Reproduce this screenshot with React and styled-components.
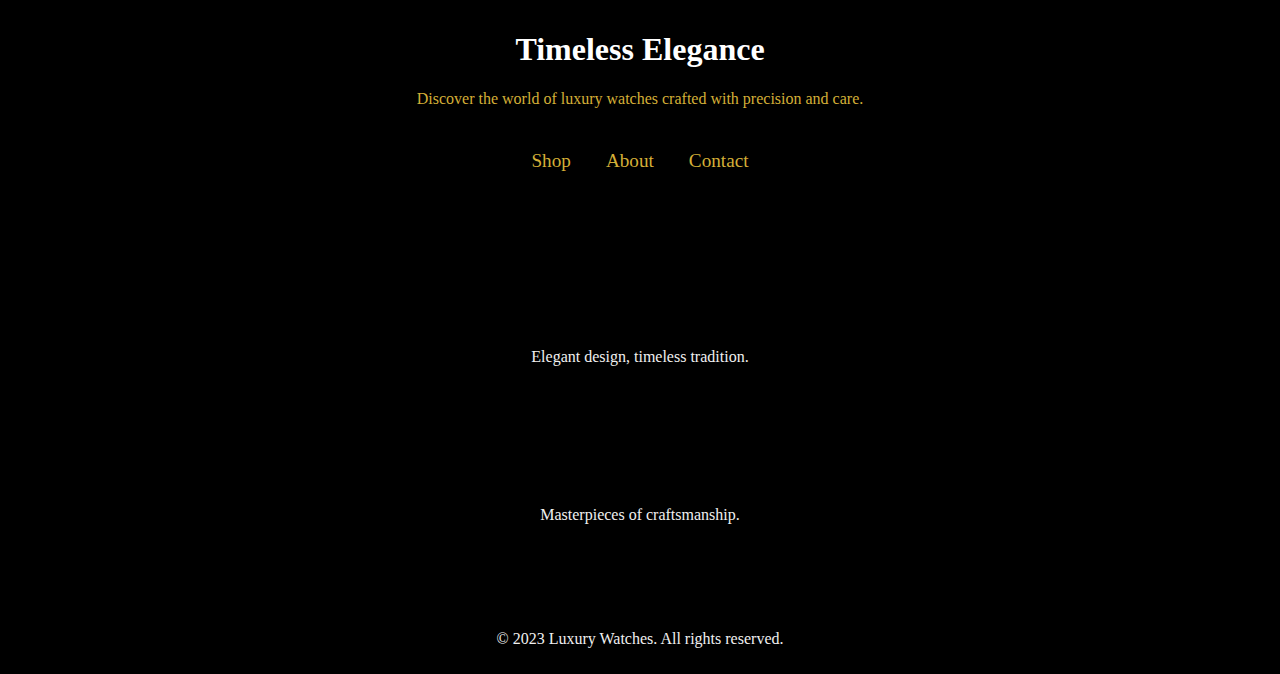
import React from "react";
import styled, { createGlobalStyle } from "styled-components";

const Global = createGlobalStyle`
  html, body { margin: 0; padding: 0; background: #000; }
  body { font-family: "Liberation Serif", "Times New Roman", serif; color: #fff; }
`;

const Page = styled.div`
  display: flex;
  flex-direction: column;
  align-items: center;
  min-height: 674px;
  background: #000;
`;

const Header = styled.header`
  display: flex;
  flex-direction: column;
  align-items: center;
  padding-top: 31px;
`;

const Title = styled.h1`
  margin: 0;
  font-size: 32px;
  line-height: 37px;
  font-weight: bold;
  color: #fff;
`;

const Subtitle = styled.p`
  margin: 22px 0 0;
  font-size: 16px;
  line-height: 18px;
  color: #d4af37;
`;

const Nav = styled.nav`
  display: flex;
  gap: 35px;
  margin-top: 42px;
`;

const NavLink = styled.a`
  font-size: 19.2px;
  line-height: 22px;
  color: #d4af37;
  text-decoration: none;
`;

const Caption = styled.p`
  margin: ${(p) => p.$top}px 0 0;
  font-size: 16px;
  line-height: 18px;
  color: #f0f0f0;
  text-align: center;
`;

const Footer = styled.footer`
  margin-top: 106px;
  font-size: 16px;
  line-height: 18px;
  color: #f0f0f0;
  padding-bottom: 26px;
`;

export default function App() {
  return (
    <>
      <Global />
      <Page>
        <Header>
          <Title>Timeless Elegance</Title>
          <Subtitle>Discover the world of luxury watches crafted with precision and care.</Subtitle>
          <Nav>
            <NavLink href="#">Shop</NavLink>
            <NavLink href="#">About</NavLink>
            <NavLink href="#">Contact</NavLink>
          </Nav>
        </Header>
        <main>
          <Caption $top={176}>Elegant design, timeless tradition.</Caption>
          <Caption $top={140}>Masterpieces of craftsmanship.</Caption>
        </main>
        <Footer>© 2023 Luxury Watches. All rights reserved.</Footer>
      </Page>
    </>
  );
}
